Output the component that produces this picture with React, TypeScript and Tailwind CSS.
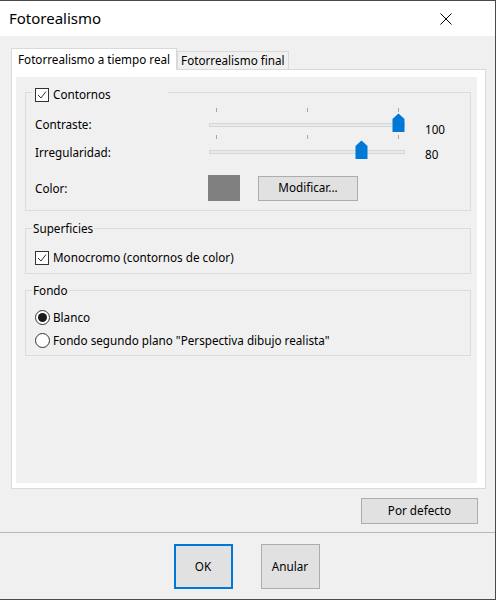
import React from "react";

/* ---------- small controls ---------- */
function CheckBox() {
  return (
    <span className="flex h-[14px] w-[14px] shrink-0 items-center justify-center border border-[#333333] bg-white">
      <svg width="12" height="12" viewBox="0 0 12 12">
        <polyline points="2,6 5,9 10,2.5" fill="none" stroke="#333333" strokeWidth="1" />
      </svg>
    </span>
  );
}

function Radio({ on }: { on?: boolean }) {
  return (
    <span className="flex h-[15px] w-[15px] shrink-0 items-center justify-center rounded-full border border-[#333333] bg-white">
      {on && <span className="h-[9px] w-[9px] rounded-full bg-[#1a1a1a]" />}
    </span>
  );
}

function Slider({ value }: { value: number }) {
  // thumb center: 7px + value * 1.82px from track start
  const center = 7 + value * 1.82;
  return (
    <div className="relative h-[27px] w-[196px]">
      {[7, 98, 189].map((x) => (
        <span key={x} className="absolute top-0 h-[4px] w-px bg-[#a6a6a6]" style={{ left: x }} />
      ))}
      <div className="absolute left-0 top-[15px] h-[4px] w-[196px] border border-[#d6d6d6] bg-[#e7eaea]" />
      <svg
        className="absolute top-[5px]"
        style={{ left: center - 6.5 }}
        width="13"
        height="19"
        viewBox="0 0 13 19"
      >
        <path d="M6.5 0.5 L12.5 6 V19 H0.5 V6 Z" fill="#0078d7" />
      </svg>
    </div>
  );
}

function Button({ children, className = "" }: { children: React.ReactNode; className?: string }) {
  return (
    <div
      className={`flex items-center justify-center border border-[#adadad] bg-[#e1e1e1] text-black ${className}`}
    >
      {children}
    </div>
  );
}

/* ---------- dialog ---------- */
export default function App() {
  return (
    <div
      className="flex h-[600px] w-[496px] flex-col border-r border-t border-b border-[#4a4a4a] bg-[#f0f0f0] text-[11.7px] text-black"
      style={{ fontFamily: '"Noto Sans", "Open Sans", sans-serif' }}
    >
      {/* title bar */}
      <div className="flex h-[35px] shrink-0 items-center justify-between bg-white pl-[9px] pr-[43px]">
        <span className="text-[15px]">Fotorealismo</span>
        <svg width="12" height="12" viewBox="0 0 12 12">
          <path d="M0.5 0.5 L11.5 11.5 M11.5 0.5 L0.5 11.5" stroke="#000" strokeWidth="1" />
        </svg>
      </div>

      {/* tabs */}
      <div className="flex h-[21px] items-end pl-[11px] mt-[12px]">
        <div className="relative z-10 -mb-px flex h-[22px] items-center border border-b-0 border-[#d9d9d9] bg-white px-[6px]">
          Fotorrealismo a tiempo real
        </div>
        <div className="flex h-[18px] items-center border border-b-0 border-[#d9d9d9] bg-[#f0f0f0] px-[3px]">
          Fotorrealismo final
        </div>
      </div>

      {/* tab pane */}
      <div className="ml-[11px] h-[420px] w-[475px] shrink-0 border border-[#d9d9d9] bg-white pb-[5px] pl-[4px] pr-[8px] pt-[7px]">
        <div className="h-full bg-[#f0f0f0] pl-[9px] pr-[6px] pt-[8px]">
          {/* Contornos */}
          <fieldset className="border border-[#dcdcdc] pb-[9px] pl-[6px]">
            <legend className="h-[14px] w-[136px] pl-[3px]">
              <div className="flex items-start gap-[4px] pt-[3px]">
                <CheckBox />
                <span className="-mt-[2px] leading-[16px]">Contornos</span>
              </div>
            </legend>
            <div className="pl-[3px] pt-[9px]">
              <div className="flex h-[27px]">
                <div className="w-[174px] pt-[8px] leading-[16px]">Contraste:</div>
                <Slider value={100} />
                <div className="pl-[20px] pt-[13px] leading-[16px]">100</div>
              </div>
              <div className="flex h-[27px]">
                <div className="w-[174px] pt-[9px] leading-[16px]">Irregularidad:</div>
                <Slider value={80} />
                <div className="pl-[20px] pt-[11px] leading-[16px]">80</div>
              </div>
              <div className="mt-[13px] flex h-[26px] items-center">
                <div className="w-[173px] pt-[2px]">Color:</div>
                <div className="h-[26px] w-[32px] bg-[#808080]" />
                <Button className="ml-[18px] h-[25px] w-[100px]">Modificar...</Button>
              </div>
            </div>
          </fieldset>

          {/* Superficies */}
          <fieldset className="mt-[10px] border border-[#dcdcdc] pb-[8px] pl-[6px]">
            <legend className="h-[14px] px-[1px] leading-[14px]">Superficies</legend>
            <div className="flex items-center gap-[4px] pl-[3px] pt-[15px]">
              <CheckBox />
              <span className="leading-[15px]">Monocromo (contornos de color)</span>
            </div>
          </fieldset>

          {/* Fondo */}
          <fieldset className="mt-[9px] border border-[#dcdcdc] pb-[7px] pl-[6px]">
            <legend className="h-[14px] px-[1px] leading-[14px]">Fondo</legend>
            <div className="flex flex-col gap-[8px] pl-[3px] pt-[13px]">
              <div className="flex items-center gap-[3px]">
                <Radio on />
                <span className="leading-[15px]">Blanco</span>
              </div>
              <div className="flex items-center gap-[3px]">
                <Radio />
                <span className="leading-[15px]">Fondo segundo plano "Perspectiva dibujo realista"</span>
              </div>
            </div>
          </fieldset>
        </div>
      </div>

      {/* default button */}
      <Button className="mr-[17px] mt-[9px] h-[26px] w-[117px] self-end">Por defecto</Button>

      {/* footer */}
      <div className="mt-[8px] flex flex-1 justify-center gap-[28px] border-t border-[#b9b9b9] pr-[2px] pt-[11px]">
        <div className="flex h-[45px] w-[59px] items-center justify-center border-2 border-[#0078d7] bg-[#e1e1e1]">
          OK
        </div>
        <Button className="h-[45px] w-[59px]">Anular</Button>
      </div>
    </div>
  );
}
